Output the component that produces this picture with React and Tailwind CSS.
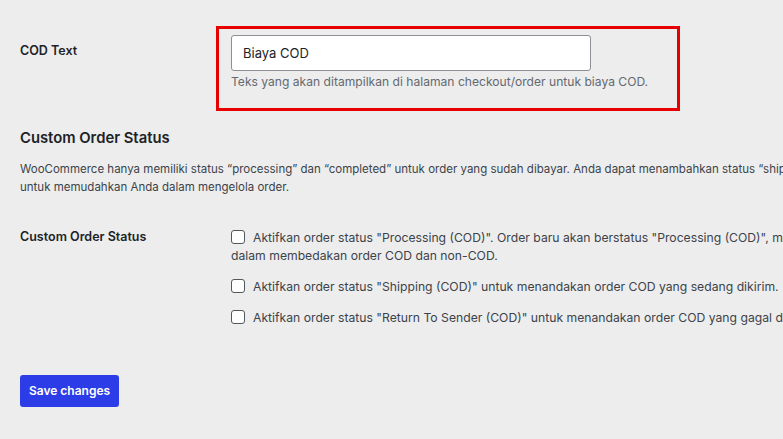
import React from 'react';

const options = [
  {
    lines: [
      'Aktifkan order status "Processing (COD)". Order baru akan berstatus "Processing (COD)", memudahkan Anda',
      'dalam membedakan order COD dan non-COD.',
    ],
  },
  { lines: ['Aktifkan order status "Shipping (COD)" untuk menandakan order COD yang sedang dikirim.'] },
  { lines: ['Aktifkan order status "Return To Sender (COD)" untuk menandakan order COD yang gagal dikirim.'] },
];

const Settings = () => {
  return (
    <div className="h-[439px] w-full overflow-hidden bg-[#ededed] font-['Inter',sans-serif] text-[#3c434a] antialiased">
      <div className="w-[1100px] pl-5 pt-[26px]">
        {/* COD Text */}
        <div className="flex items-start">
          <div className="w-[196px] pt-[16px] text-[12.5px] font-semibold leading-[18px] text-[#1d2327]">COD Text</div>
          <div className="h-[85px] w-[464px] border-[3px] border-[#e60000] pl-3 pt-[6px]">
            <input
              type="text"
              defaultValue="Biaya COD"
              className="block h-[36px] w-[360px] rounded-[3px] border border-[#8c8f94] bg-white px-[11px] text-[13px] text-[#1d2327] outline-none"
            />
            <p className="mt-[2px] text-[12.1px] leading-[18px] text-[#646970]">
              Teks yang akan ditampilkan di halaman checkout/order untuk biaya COD.
            </p>
          </div>
        </div>

        <h2 className="mt-[17px] text-[14.8px] font-semibold leading-[20px] text-[#1d2327]">Custom Order Status</h2>
        <p className="mt-[13px] whitespace-nowrap text-[11.5px] leading-[17.5px] text-[#3c434a]">
          WooCommerce hanya memiliki status “processing” dan “completed” untuk order yang sudah dibayar. Anda dapat menambahkan status “shipping (COD)” dan “return to sender (COD)”
          <br />
          untuk memudahkan Anda dalam mengelola order.
        </p>

        {/* Custom Order Status */}
        <div className="mt-[32px] flex items-start">
          <div className="w-[211px] text-[12.5px] font-semibold leading-[18px] text-[#1d2327]">Custom Order Status</div>
          <div className="flex flex-col gap-[13px] pt-[1px]">
            {options.map((opt, i) => (
              <label key={i} className="whitespace-nowrap text-[12.2px] leading-[18px] text-[#3c434a]">
                <span className="mr-[8px] inline-block h-[14px] w-[14px] rounded-[3px] border border-[#50575e] bg-white align-[-2px]"></span>
                {opt.lines.map((l, j) => (
                  <React.Fragment key={j}>
                    {j > 0 && <br />}
                    {l}
                  </React.Fragment>
                ))}
              </label>
            ))}
          </div>
        </div>

        <button className="mt-[48px] h-[32px] w-[99px] rounded-[3px] bg-[#2c3ce7] text-[12px] font-semibold text-white">
          Save changes
        </button>
      </div>
    </div>
  );
};

export default function App() {
  return <Settings />;
}
